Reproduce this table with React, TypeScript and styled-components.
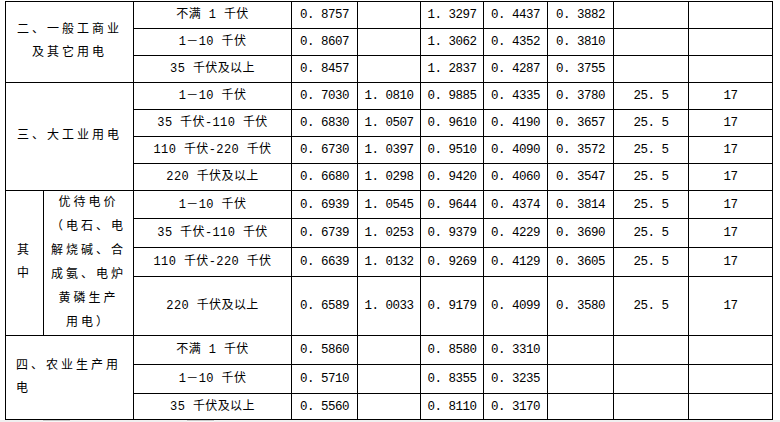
import React from "react";
import styled, { createGlobalStyle } from "styled-components";

const GlobalStyle = createGlobalStyle`
  html, body {
    margin: 0;
    padding: 0;
    background: #fff;
  }
  body {
    font-family: "Liberation Mono", "Noto Sans CJK SC", monospace;
    color: #000;
  }
`;

const Page = styled.div`
  width: 780px;
  height: 422px;
  overflow: hidden;
  display: flex;
  flex-direction: column;
`;

const TableWrap = styled.div`
  padding: 1px 0 0 5px;
  flex: 1;
`;

const Table = styled.table`
  border-collapse: collapse;
  table-layout: fixed;
  width: 767px;
`;

const Row = styled.tr<{ $h: number }>`
  height: ${(p) => p.$h}px;
`;

const Cell = styled.td`
  border: 1px solid #000;
  padding: 0;
  text-align: center;
  vertical-align: middle;
  white-space: nowrap;
  line-height: 14px;
  font-size: 12.5px;
  letter-spacing: -0.5px;
`;

const LabelCell = styled(Cell)<{ $align?: string; $lh?: number; $pad?: number }>`
  text-align: ${(p) => p.$align || "center"};
  padding-left: ${(p) => p.$pad || 0}px;
  font-size: 12px;
  letter-spacing: 3px;
  line-height: ${(p) => p.$lh || 23}px;
`;

const RangeCell = styled(Cell)`
  font-size: 12px;
  letter-spacing: 0.4px;
`;

const Footer = styled.div`
  height: 3px;
  background: #f0f0f0;
  display: flex;
  padding-left: 43px;
  gap: 117px;
`;

const Tab = styled.span`
  width: 27px;
  height: 3px;
  border-top: 1px solid #c8c8c8;
  background: #f7f7f7;
`;

const colWidths = [38, 90, 158, 66, 63, 63, 64, 66, 75, 84];
const heights = [27, 27, 27, 27, 27, 27, 27, 28, 29, 28, 59, 29, 29, 26];

type Vals = string[];

const rangeRows: [string, Vals][] = [
  ["不满 1 千伏", ["0. 8757", "", "1. 3297", "0. 4437", "0. 3882", "", ""]],
  ["1－10 千伏", ["0. 8607", "", "1. 3062", "0. 4352", "0. 3810", "", ""]],
  ["35 千伏及以上", ["0. 8457", "", "1. 2837", "0. 4287", "0. 3755", "", ""]],
  ["1－10 千伏", ["0. 7030", "1. 0810", "0. 9885", "0. 4335", "0. 3780", "25. 5", "17"]],
  ["35 千伏-110 千伏", ["0. 6830", "1. 0507", "0. 9610", "0. 4190", "0. 3657", "25. 5", "17"]],
  ["110 千伏-220 千伏", ["0. 6730", "1. 0397", "0. 9510", "0. 4090", "0. 3572", "25. 5", "17"]],
  ["220 千伏及以上", ["0. 6680", "1. 0298", "0. 9420", "0. 4060", "0. 3547", "25. 5", "17"]],
  ["1－10 千伏", ["0. 6939", "1. 0545", "0. 9644", "0. 4374", "0. 3814", "25. 5", "17"]],
  ["35 千伏-110 千伏", ["0. 6739", "1. 0253", "0. 9379", "0. 4229", "0. 3690", "25. 5", "17"]],
  ["110 千伏-220 千伏", ["0. 6639", "1. 0132", "0. 9269", "0. 4129", "0. 3605", "25. 5", "17"]],
  ["220 千伏及以上", ["0. 6589", "1. 0033", "0. 9179", "0. 4099", "0. 3580", "25. 5", "17"]],
  ["不满 1 千伏", ["0. 5860", "", "0. 8580", "0. 3310", "", "", ""]],
  ["1－10 千伏", ["0. 5710", "", "0. 8355", "0. 3235", "", "", ""]],
  ["35 千伏及以上", ["0. 5560", "", "0. 8110", "0. 3170", "", "", ""]],
];

const groupLabel = (i: number) => {
  switch (i) {
    case 0:
      return (
        <LabelCell rowSpan={3} colSpan={2}>
          二、一般工商业
          <br />
          及其它用电
        </LabelCell>
      );
    case 3:
      return (
        <LabelCell rowSpan={4} colSpan={2}>
          三、大工业用电
        </LabelCell>
      );
    case 7:
      return (
        <>
          <LabelCell rowSpan={4}>
            其<br />中
          </LabelCell>
          <LabelCell rowSpan={4} $lh={24}>
            优待电价
            <br />
            （电石、电
            <br />
            解烧碱、合
            <br />
            成氨、电炉
            <br />
            黄磷生产
            <br />
            用电）
          </LabelCell>
        </>
      );
    case 11:
      return (
        <LabelCell rowSpan={3} colSpan={2} $align="left" $pad={10}>
          四、农业生产用
          <br />
          电
        </LabelCell>
      );
    default:
      return null;
  }
};

export default function App() {
  return (
    <Page>
      <GlobalStyle />
      <TableWrap>
        <Table>
          <colgroup>
            {colWidths.map((w, i) => (
              <col key={i} style={{ width: w }} />
            ))}
          </colgroup>
          <tbody>
            {rangeRows.map(([range, vals], i) => (
              <Row key={i} $h={heights[i]}>
                {groupLabel(i)}
                <RangeCell>{range}</RangeCell>
                {vals.map((v, j) => (
                  <Cell key={j}>{v}</Cell>
                ))}
              </Row>
            ))}
          </tbody>
        </Table>
      </TableWrap>
      <Footer>
        <Tab />
        <Tab />
      </Footer>
    </Page>
  );
}
